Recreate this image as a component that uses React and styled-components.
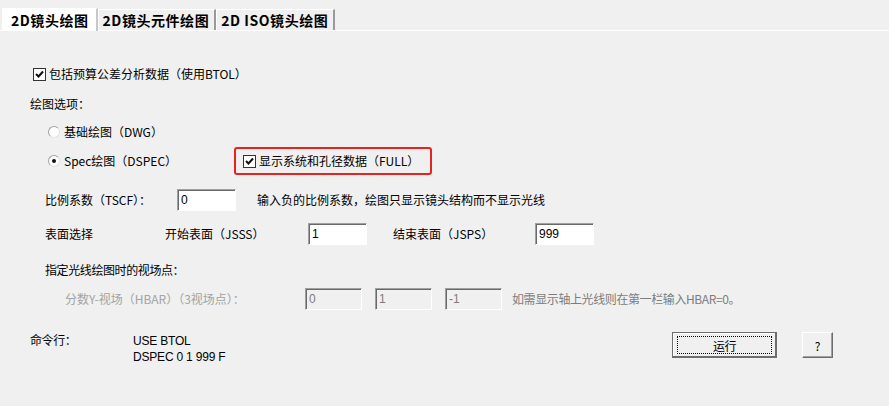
import styled, { createGlobalStyle } from 'styled-components';

const GlobalStyle = createGlobalStyle`
  body {
    margin: 0;
    background: #f0f0f0;
  }
`;

const cjk = `"Noto Sans CJK SC", "Liberation Sans", sans-serif`;

export default function App() {
  return (
    <>
      <GlobalStyle />
      <Window>
        <TabBar>
          <Tab $active>2D镜头绘图</Tab>
          <Tab>2D镜头元件绘图</Tab>
          <Tab>2D ISO镜头绘图</Tab>
        </TabBar>

        <Body>
          <Row $mt={33} $h={20} $indent={33}>
            <CheckBox checked />
            <Label $ml={3}>包括预算公差分析数据（使用BTOL）</Label>
          </Row>

          <Row $mt={10} $h={20} $indent={30}>
            <Label>绘图选项：</Label>
          </Row>

          <Row $mt={8} $h={20} $indent={48}>
            <Radio />
            <Label $ml={4}>基础绘图（DWG）</Label>
          </Row>

          <Row $mt={5} $h={28} $indent={48}>
            <Cell $w={186}>
              <Radio checked />
              <Label $ml={4}>Spec绘图（DSPEC）</Label>
            </Cell>
            <Highlight>
              <CheckBox checked />
              <Label $ml={3}>显示系统和孔径数据（FULL）</Label>
            </Highlight>
          </Row>

          <Row $mt={14} $h={22} $indent={45}>
            <Cell $w={132}>
              <Label>比例系数（TSCF）：</Label>
            </Cell>
            <Field $w={59} defaultValue="0" />
            <Label $ml={21}>输入负的比例系数，绘图只显示镜头结构而不显示光线</Label>
          </Row>

          <Row $mt={12} $h={22} $indent={45}>
            <Cell $w={120}>
              <Label>表面选择</Label>
            </Cell>
            <Cell $w={143}>
              <Label>开始表面（JSSS）</Label>
            </Cell>
            <Field $w={59} defaultValue="1" />
            <Cell $w={168} $pl={26}>
              <Label>结束表面（JSPS）</Label>
            </Cell>
            <Field $w={59} defaultValue="999" />
          </Row>

          <Row $mt={15} $h={20} $indent={45}>
            <Label $tight>指定光线绘图时的视场点：</Label>
          </Row>

          <Row $mt={8} $h={22} $indent={65}>
            <Cell $w={240}>
              <Label $color="#a3a3a3">分数Y-视场（HBAR）（3视场点）：</Label>
            </Cell>
            <FieldGroup>
              <Field $w={57} disabled defaultValue="0" />
              <Field $w={57} disabled defaultValue="1" />
              <Field $w={57} disabled defaultValue="-1" />
            </FieldGroup>
            <Label $tight $ml={10} $color="#7d7d7d">如需显示轴上光线则在第一栏输入HBAR=0。</Label>
          </Row>

          <CommandRow>
            <Cell $w={103} $top>
              <Label $tight>命令行：</Label>
            </Cell>
            <Command>
              <span>USE BTOL</span>
              <span>DSPEC 0 1 999 F</span>
            </Command>
            <Button $w={105} $focused>
              <FocusRing>运行</FocusRing>
            </Button>
            <Button $w={31}>?</Button>
          </CommandRow>
        </Body>
      </Window>
    </>
  );
}

function CheckBox({ checked }) {
  return (
    <Box>
      {checked && (
        <svg width="9" height="9" viewBox="0 0 9 9">
          <path d="M1 4 L3.5 6.5 L8 1.5" fill="none" stroke="#111" strokeWidth="2" />
        </svg>
      )}
    </Box>
  );
}

function Radio({ checked }) {
  return <RadioDot $checked={checked} />;
}

const Window = styled.div`
  width: 889px;
  height: 406px;
  overflow: hidden;
  background: #f0f0f0;
  font-family: ${cjk};
  font-size: 12px;
  color: #000;
`;

const TabBar = styled.div`
  height: 30px;
  display: flex;
  align-items: flex-end;
  padding-left: 2px;
  border-bottom: 1px solid #fff;
`;

const Tab = styled.div`
  height: ${(p) => (p.$active ? 22 : 20)}px;
  margin-bottom: ${(p) => (p.$active ? -1 : 0)}px;
  padding: 0 ${(p) => (p.$active ? 7 : 5)}px 0 ${(p) => (p.$active ? 8 : 4)}px;
  display: flex;
  align-items: center;
  background: ${(p) => (p.$active ? '#fff' : '#f0f0f0')};
  border-left: 1px solid #fff;
  border-top: 1px solid #fff;
  border-right: 2px solid ${(p) => (p.$active ? '#c8c8c8' : '#9a9a9a')};
  font-weight: 700;
  font-size: 14px;
  letter-spacing: 0.55px;
  white-space: nowrap;
`;

const Body = styled.div`
  display: flex;
  flex-direction: column;
`;

const Row = styled.div`
  display: flex;
  align-items: center;
  height: ${(p) => p.$h}px;
  margin-top: ${(p) => p.$mt}px;
  padding-left: ${(p) => p.$indent}px;
`;

const Cell = styled.div`
  width: ${(p) => p.$w}px;
  padding-left: ${(p) => p.$pl || 0}px;
  box-sizing: border-box;
  flex-shrink: 0;
  display: flex;
  align-items: ${(p) => (p.$top ? 'flex-start' : 'center')};
  align-self: ${(p) => (p.$top ? 'flex-start' : 'auto')};
`;

const Label = styled.span`
  margin-left: ${(p) => p.$ml || 0}px;
  color: ${(p) => p.$color || '#000'};
  letter-spacing: ${(p) => (p.$tight ? '-0.4px' : '0')};
  white-space: nowrap;
  line-height: 16px;
`;

const Box = styled.span`
  width: 13px;
  height: 13px;
  box-sizing: border-box;
  border: 1px solid #333;
  background: #fff;
  display: inline-flex;
  align-items: center;
  justify-content: center;
  flex-shrink: 0;
`;

const RadioDot = styled.span`
  width: 12px;
  height: 12px;
  box-sizing: border-box;
  border-radius: 50%;
  border: 1px solid #a0a0a0;
  border-right-color: #e3e3e3;
  border-bottom-color: #e3e3e3;
  background: #fff;
  position: relative;
  flex-shrink: 0;

  &::after {
    content: '';
    display: ${(p) => (p.$checked ? 'block' : 'none')};
    position: absolute;
    left: 3px;
    top: 3px;
    width: 4px;
    height: 4px;
    border-radius: 50%;
    background: #111;
  }
`;

const Highlight = styled.div`
  width: 198px;
  height: 28px;
  box-sizing: border-box;
  border: 2px solid #e8231f;
  border-radius: 3px;
  display: flex;
  align-items: center;
  padding-left: 7px;
`;

const Field = styled.input`
  width: ${(p) => p.$w}px;
  height: 22px;
  box-sizing: border-box;
  flex-shrink: 0;
  margin: 0;
  padding: 0 0 0 3px;
  border: 1px solid;
  border-color: #a0a0a0 #fff #fff #a0a0a0;
  box-shadow: inset 1px 1px #696969;
  background: ${(p) => (p.disabled ? '#f0f0f0' : '#fff')};
  color: ${(p) => (p.disabled ? '#7d7d7d' : '#000')};
  font-family: "Liberation Sans", sans-serif;
  font-size: 12px;
  outline: none;
`;

const FieldGroup = styled.div`
  display: flex;
  gap: 13px;
`;

const CommandRow = styled.div`
  display: flex;
  align-items: flex-start;
  margin-top: 22px;
  padding-left: 30px;
`;

const Command = styled.div`
  display: flex;
  flex-direction: column;
  width: 539px;
  padding-top: 1px;
  font-family: "Liberation Sans", sans-serif;
  letter-spacing: -0.2px;
  line-height: 16px;
`;

const Button = styled.div`
  width: ${(p) => p.$w}px;
  height: 26px;
  box-sizing: border-box;
  margin-left: ${(p) => (p.$focused ? 0 : 25)}px;
  display: flex;
  align-items: center;
  justify-content: center;
  background: #f0f0f0;
  border: 1px solid;
  border-color: ${(p) => (p.$focused ? '#6d6d6d' : '#fff #6d6d6d #6d6d6d #fff')};
  box-shadow: ${(p) =>
    p.$focused ? 'inset -1px -1px #6d6d6d, inset 1px 1px #fff' : 'inset -1px -1px #a0a0a0'};
  font-size: 12px;
`;

const FocusRing = styled.span`
  width: 95px;
  height: 18px;
  box-sizing: border-box;
  border: 1px dotted #000;
  display: flex;
  align-items: center;
  justify-content: center;
  letter-spacing: -0.4px;
`;
